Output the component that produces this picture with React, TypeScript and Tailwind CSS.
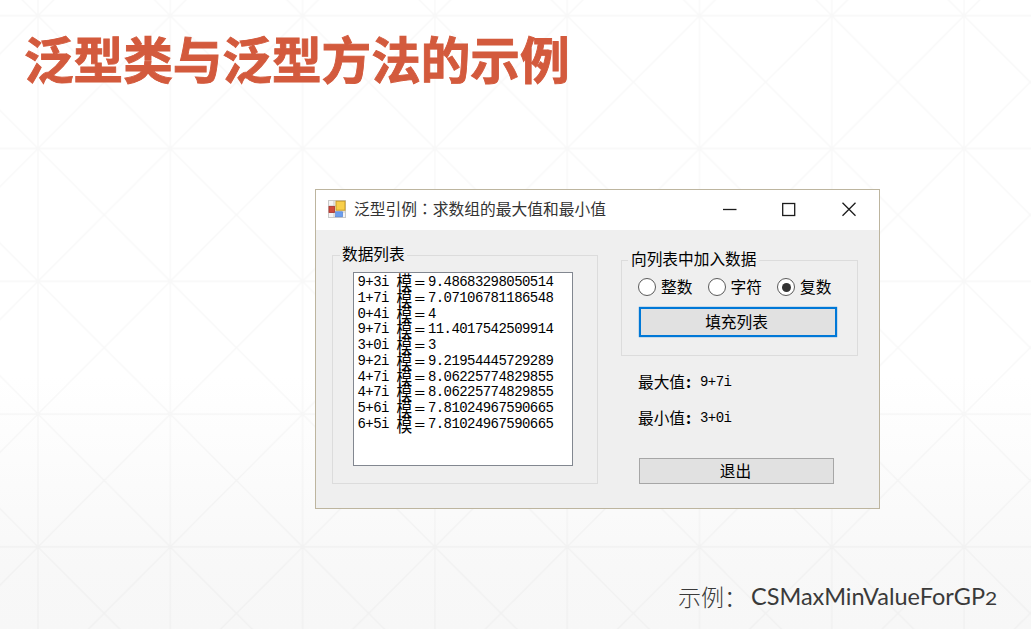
import React from "react";

const rows: [string, string][] = [
  ["9+3i", "9.48683298050514"],
  ["1+7i", "7.07106781186548"],
  ["0+4i", "4"],
  ["9+7i", "11.4017542509914"],
  ["3+0i", "3"],
  ["9+2i", "9.21954445729289"],
  ["4+7i", "8.06225774829855"],
  ["4+7i", "8.06225774829855"],
  ["5+6i", "7.81024967590665"],
  ["6+5i", "7.81024967590665"],
];

const cjk = "font-['Noto_Sans_CJK_SC',sans-serif]";
const mono =
  "font-['Liberation_Mono','Noto_Sans_CJK_SC',monospace] text-[14px] tracking-[-0.56px]";

function Backdrop() {
  return (
    <svg className="absolute inset-0 h-full w-full" aria-hidden="true">
      <defs>
        <pattern id="lattice" x="38" y="15.7" width="132.3" height="132.8" patternUnits="userSpaceOnUse">
          <path
            d="M0 0H132.3M0 132.8H132.3M0 0V132.8M132.3 0V132.8M0 0L132.3 132.8M132.3 0L0 132.8"
            stroke="#000"
            strokeOpacity="0.026"
            strokeWidth="1.3"
            fill="none"
          />
        </pattern>
      </defs>
      <rect width="100%" height="100%" fill="url(#lattice)" />
    </svg>
  );
}

function AppIcon() {
  return (
    <svg className="h-[18px] w-[18px]" viewBox="0 0 18 18">
      <rect x="0.5" y="0.5" width="17" height="17" fill="#f4f4f4" stroke="#c9c9c9" />
      <path d="M6 1V17M1 6H8M1 12H17" stroke="#c9c9c9" />
      <rect x="1" y="6.5" width="5.5" height="6" fill="#d04a3c" stroke="#a8322a" strokeWidth="0.8" />
      <rect x="8" y="1.2" width="9" height="9" fill="#f8cf4a" stroke="#c99a22" />
      <rect x="7.6" y="11.8" width="7" height="5" fill="#6b9eee" stroke="#4b7bd0" strokeWidth="0.6" />
    </svg>
  );
}

function TitleBar() {
  return (
    <div className="flex h-10 items-center bg-white pb-[2px] pl-3">
      <AppIcon />
      <span className={`${cjk} ml-2 whitespace-nowrap text-[15.75px] leading-5 text-[#333]`}>
        泛型引例<span className="font-['Noto_Sans_CJK_TC',sans-serif]" lang="zh-Hant">：</span>求数组的最大值和最小值
      </span>
      <svg className="ml-auto mr-[21px] h-4 w-[136px]" viewBox="0 0 136 16" fill="none" stroke="#1c1c1c" strokeWidth="1.3">
        <path d="M1 8.5H14.5" />
        <rect x="60.7" y="2.5" width="12" height="12" />
        <path d="M120.5 1.7L133.5 14.7M133.5 1.7L120.5 14.7" />
      </svg>
    </div>
  );
}

function Radio({ label, checked }: { label: string; checked?: boolean }) {
  return (
    <label className="flex w-[69.5px] items-center">
      <span className="flex h-[18px] w-[18px] shrink-0 items-center justify-center rounded-full border-[1.5px] border-[#5a5a5a] bg-white">
        {checked && <span className="h-[9px] w-[9px] rounded-full bg-[#333]" />}
      </span>
      <span className={`${cjk} ml-[5px] whitespace-nowrap text-[15.7px] leading-5 text-black`}>{label}</span>
    </label>
  );
}

function Result({ label, value }: { label: string; value: string }) {
  return (
    <div className="flex h-5 items-center whitespace-nowrap leading-5 text-black">
      <span className={`${cjk} w-[62px] text-[15.7px]`}>
        {label}
        <span className="ml-px font-bold">:</span>
      </span>
      <span className={mono}>{value}</span>
    </div>
  );
}

function DataList() {
  return (
    <section className="mt-[25px] ml-4 flex h-[229px] w-[266px] flex-col border border-[#dcdcdc]">
      <h2 className={`${cjk} mt-[-12px] ml-[7px] w-[67px] whitespace-nowrap bg-[#efefef] pl-0.5 text-[15.7px] leading-5 text-black`}>
        数据列表
      </h2>
      <div className="mt-[8px] ml-5 h-[194px] w-[220px] overflow-hidden border-[1.5px] border-[#828790] bg-white pt-[2px] pl-[3.5px]">
        {rows.map(([z, modulus], i) => (
          <div key={i} className={`${mono} flex h-[15.75px] items-center whitespace-pre leading-[15.75px] text-black`}>
            <span className="w-[39px]">{z}</span>
            <span className={`${cjk} w-[15.7px] scale-y-120 text-[15.7px] tracking-normal`}>模</span>
            <span className={`${cjk} flex w-[15.7px] justify-center text-[15.7px] tracking-normal`}>
              <span className="scale-x-80">＝</span>
            </span>
            <span>{modulus}</span>
          </div>
        ))}
      </div>
    </section>
  );
}

function Controls() {
  return (
    <div className="ml-[23px] flex flex-col">
      <section className="mt-[30px] flex h-[96px] w-[237px] flex-col border border-[#dcdcdc]">
        <h2 className={`${cjk} mt-[-12px] ml-[6px] w-[131px] whitespace-nowrap bg-[#efefef] pl-[3px] text-[15.7px] leading-5 text-black`}>
          向列表中加入数据
        </h2>
        <div className="mt-[8px] ml-4 flex h-5 items-center">
          <Radio label="整数" />
          <Radio label="字符" />
          <Radio label="复数" checked />
        </div>
        <button className={`${cjk} mt-[10px] ml-[17px] flex h-[30px] w-[198px] items-center justify-center border-2 border-[#0078d7] bg-[#e1e1e1] pr-[3px] text-[15.7px] leading-5 text-black shadow-[0_0_1px_#0078d7]`}>
          填充列表
        </button>
      </section>
      <div className="mt-4 ml-[17px] flex flex-col gap-4">
        <Result label="最大值" value="9+7i" />
        <Result label="最小值" value="3+0i" />
      </div>
      <button className={`${cjk} mt-[30px] ml-[18px] flex h-[26px] w-[195px] items-center justify-center border-[1.5px] border-[#a6a6a6] bg-[#e1e1e1] pr-[2px] text-[15.7px] leading-5 text-black`}>
        退出
      </button>
    </div>
  );
}

export default function App() {
  return (
    <div className="relative h-[629px] w-[1031px] overflow-hidden bg-[linear-gradient(to_bottom,#fff_0%,#fff_60%,#f8f8f8_90%,#f7f7f7_100%)]">
      <Backdrop />
      <main className="relative flex h-full flex-col">
        <h1 className={`${cjk} mt-6 ml-6 h-[69px] whitespace-nowrap text-[49.6px] font-bold leading-[66px] text-[#d35a3d] [-webkit-text-stroke:0.9px_#d35a3d]`}>
          泛型类与泛型方法的示例
        </h1>
        <div className="mt-24 ml-[315px] h-[320px] w-[565px] border border-[#bdb59f] bg-[#efefef]">
          <TitleBar />
          <div className="flex">
            <DataList />
            <Controls />
          </div>
        </div>
        <footer className="mt-[71px] ml-[678px] flex h-8 items-center whitespace-nowrap leading-8 text-[#3a3a3a]">
          <span className={`${cjk} w-[73px] text-[23px] font-light`}>示例：</span>
          <span className="font-['Lato',sans-serif] text-[23.5px]">
            CSMaxMinValueForGP<span className="inline-block origin-left scale-x-120 text-[17.5px] leading-4">2</span>
          </span>
        </footer>
      </main>
    </div>
  );
}
